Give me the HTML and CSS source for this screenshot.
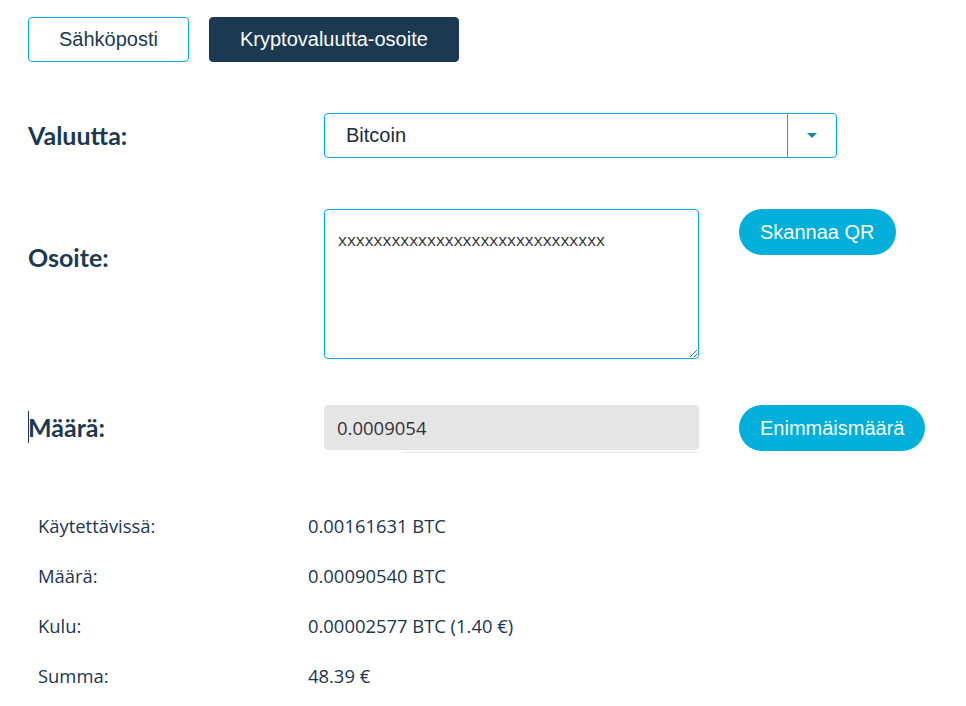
FILE: index.html
```html
<!DOCTYPE html>
<html>
<head>
  <title>Lähetä</title>
  <link rel="stylesheet" href="styles.css">
</head>
<body>
  <div class="page">
    <div class="tabs">
      <button class="tab">Sähköposti</button>
      <button class="tab tab-active">Kryptovaluutta-osoite</button>
    </div>

    <!-- currency -->
    <div class="form-row row-currency">
      <label class="form-label">Valuutta:</label>
      <div class="select-box">
        <span class="select-value">Bitcoin</span>
        <span class="select-arrow"><span class="arrow-down"></span></span>
      </div>
    </div>

    <!-- address -->
    <div class="form-row row-address">
      <label class="form-label label-top">Osoite:</label>
      <textarea class="address-input">xxxxxxxxxxxxxxxxxxxxxxxxxxxxxx</textarea>
      <button class="pill-button">Skannaa QR</button>
    </div>

    <!-- amount -->
    <div class="form-row row-amount">
      <label class="form-label"><span class="text-caret"></span>Määrä:</label>
      <div class="amount-wrap">
        <input class="amount-input" type="text" value="0.0009054" readonly>
        <div class="amount-line"></div>
      </div>
      <button class="pill-button">Enimmäismäärä</button>
    </div>

    <div class="summary">
      <div class="summary-row"><span class="summary-label">Käytettävissä:</span><span>0.00161631 BTC</span></div>
      <div class="summary-row"><span class="summary-label">Määrä:</span><span>0.00090540 BTC</span></div>
      <div class="summary-row"><span class="summary-label">Kulu:</span><span>0.00002577 BTC (1.40 €)</span></div>
      <div class="summary-row"><span class="summary-label">Summa:</span><span>48.39 €</span></div>
    </div>
  </div>
</body>
</html>
```

FILE: styles.css
```css
body {
  margin: 0;
  background-color: #fff;
  font-family: "Open Sans", "Noto Sans", sans-serif;
  color: #1b3a52;
}

.page {
  padding: 17px 28px;
}

.tabs {
  display: flex;
  gap: 20px;
}

.tab {
  height: 45px;
  padding: 0 30px;
  font-family: "Liberation Sans", Arial, sans-serif;
  font-size: 20px;
  color: #1b3a52;
  background-color: #fff;
  border: 1px solid #00b0da;
  border-radius: 4px;
  cursor: pointer;
}

.tab-active {
  background-color: #1b3a52;
  border-color: #1b3a52;
  color: #fff;
}

.form-row {
  display: flex;
  align-items: flex-start;
}

.row-currency {
  margin-top: 51px;
}

.row-address {
  margin-top: 51px;
}

.row-amount {
  margin-top: 46px;
}

.form-label {
  position: relative;
  width: 296px;
  flex-shrink: 0;
  font-family: Lato, sans-serif;
  font-weight: bold;
  font-size: 25px;
  line-height: 45px;
}

.label-top {
  margin-top: 26px;
}

.text-caret {
  position: absolute;
  left: 0;
  top: 6px;
  width: 1px;
  height: 32px;
  background-color: #1b3a52;
}

.select-box {
  display: flex;
  width: 513px;
  height: 45px;
  box-sizing: border-box;
  border: 1px solid #00b0da;
  border-radius: 4px;
}

.select-value {
  flex: 1;
  padding-left: 21px;
  line-height: 43px;
  font-family: "Liberation Sans", Arial, sans-serif;
  font-size: 20px;
  color: #1b2a3a;
}

.select-arrow {
  display: flex;
  align-items: center;
  justify-content: center;
  width: 48px;
  border-left: 1px solid #00b0da;
}

.arrow-down {
  width: 0;
  height: 0;
  border-left: 5px solid transparent;
  border-right: 5px solid transparent;
  border-top: 5px solid #1a87a6;
}

.address-input {
  width: 375px;
  height: 150px;
  box-sizing: border-box;
  padding: 18px 13px;
  border: 1px solid #00b0da;
  border-radius: 4px;
  font-family: "Open Sans", sans-serif;
  font-size: 17px;
  color: #333;
  resize: vertical;
  outline: none;
}

.pill-button {
  margin-left: 40px;
  height: 46px;
  padding: 0 21px;
  font-family: "Liberation Sans", Arial, sans-serif;
  font-size: 20px;
  color: #fff;
  background-color: #00b0da;
  border: none;
  border-radius: 23px;
  cursor: pointer;
}

.amount-wrap {
  width: 375px;
}

.amount-input {
  display: block;
  width: 100%;
  height: 45px;
  box-sizing: border-box;
  padding: 0 13px;
  border: none;
  border-radius: 4px;
  background-color: #e5e5e5;
  font-family: "Open Sans", sans-serif;
  font-size: 18.5px;
  color: #333;
  outline: none;
}

.amount-line {
  margin: 2px 0 0 79px;
  height: 1px;
  background-color: #dfeaf1;
}

.summary {
  margin-top: 47px;
  padding-left: 10px;
}

.summary-row {
  display: flex;
  height: 50px;
  align-items: center;
  font-size: 18.4px;
  color: #1b3550;
}

.summary-label {
  width: 270px;
}
```
